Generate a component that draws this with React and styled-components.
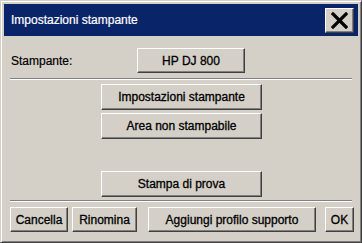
import React from "react";
import styled, { createGlobalStyle } from "styled-components";

const Global = createGlobalStyle`
  html, body {
    margin: 0;
    padding: 0;
    background: #d4d0c8;
  }
  * {
    box-sizing: border-box;
  }
`;

const Window = styled.div`
  width: 362px;
  height: 243px;
  background: #d4d0c8;
  border-top: 1px solid #d4d0c8;
  border-left: 1px solid #d4d0c8;
  border-right: 1px solid #404040;
  border-bottom: 1px solid #404040;
  box-shadow: inset 1px 1px 0 #ffffff, inset -1px -1px 0 #808080;
  padding: 3px;
  display: flex;
  flex-direction: column;
  font-family: "Liberation Sans", Arial, sans-serif;
  font-size: 12px;
  color: #000;
`;

const TitleBar = styled.div`
  height: 32px;
  background: #0a246a;
  display: flex;
  align-items: center;
  justify-content: space-between;
  padding: 0 4px 0 7px;
  color: #fff;
  -webkit-text-stroke: 0.2px #fff;
`;

const CloseButton = styled.button`
  width: 29px;
  height: 25px;
  padding: 0;
  margin: 0;
  background: #d4d0c8;
  border-top: 1px solid #ffffff;
  border-left: 1px solid #ffffff;
  border-right: 1px solid #404040;
  border-bottom: 1px solid #404040;
  box-shadow: inset -1px -1px 0 #808080;
  display: flex;
  align-items: center;
  justify-content: center;
`;

const Body = styled.div`
  flex: 1;
  display: flex;
  flex-direction: column;
  padding: 0 6px 0 6px;
`;

const PrinterRow = styled.div`
  display: flex;
  align-items: center;
  margin-top: 12px;
  height: 25px;
`;

const Label = styled.span`
  width: 127px;
  padding-left: 1px;
  -webkit-text-stroke: 0.2px #000;
`;

const Button = styled.button`
  width: ${p => p.$w}px;
  height: ${p => p.$h || 26}px;
  margin: 0 0 0 ${p => p.$ml || 0}px;
  padding: 0;
  background: #d4d0c8;
  font-family: "Liberation Sans", Arial, sans-serif;
  font-size: 12px;
  color: #000;
  -webkit-text-stroke: 0.3px #000;
  border-top: 1px solid #ffffff;
  border-left: 1px solid #ffffff;
  border-right: 1px solid #404040;
  border-bottom: 1px solid #404040;
  box-shadow: inset -1px -1px 0 #808080;
  flex-shrink: 0;
`;

const Separator = styled.div`
  height: 2px;
  margin-top: ${p => p.$mt}px;
  border-top: 1px solid #808080;
  border-bottom: 1px solid #ffffff;
`;

const ActionColumn = styled.div`
  display: flex;
  flex-direction: column;
  align-items: center;
  gap: 3px;
  margin-top: 4px;
  padding-left: 1px;
`;

const TestPrint = styled.div`
  display: flex;
  justify-content: center;
  padding-left: 1px;
  margin-top: 32px;
`;

const BottomRow = styled.div`
  display: flex;
  margin-top: 5px;
  height: 25px;
`;

function CloseIcon() {
  return (
    <svg width="17" height="17" viewBox="0 0 17 17">
      <path d="M2 2 L15 15 M15 2 L2 15" stroke="#000" strokeWidth="3.2" strokeLinecap="square" />
    </svg>
  );
}

export default function App() {
  return (
    <>
      <Global />
      <Window>
        <TitleBar>
          <span>Impostazioni stampante</span>
          <CloseButton>
            <CloseIcon />
          </CloseButton>
        </TitleBar>
        <Body>
          <PrinterRow>
            <Label>Stampante:</Label>
            <Button $w={108} $h={25}>HP DJ 800</Button>
          </PrinterRow>
          <Separator $mt={5} />
          <ActionColumn>
            <Button $w={161}>Impostazioni stampante</Button>
            <Button $w={161}>Area non stampabile</Button>
          </ActionColumn>
          <TestPrint>
            <Button $w={161}>Stampa di prova</Button>
          </TestPrint>
          <Separator $mt={3} />
          <BottomRow>
            <Button $w={58} $h={25}>Cancella</Button>
            <Button $w={65} $h={25} $ml={4}>Rinomina</Button>
            <Button $w={168} $h={25} $ml={11}>Aggiungi profilo supporto</Button>
            <Button $w={29} $h={25} $ml={9}>OK</Button>
          </BottomRow>
        </Body>
      </Window>
    </>
  );
}
